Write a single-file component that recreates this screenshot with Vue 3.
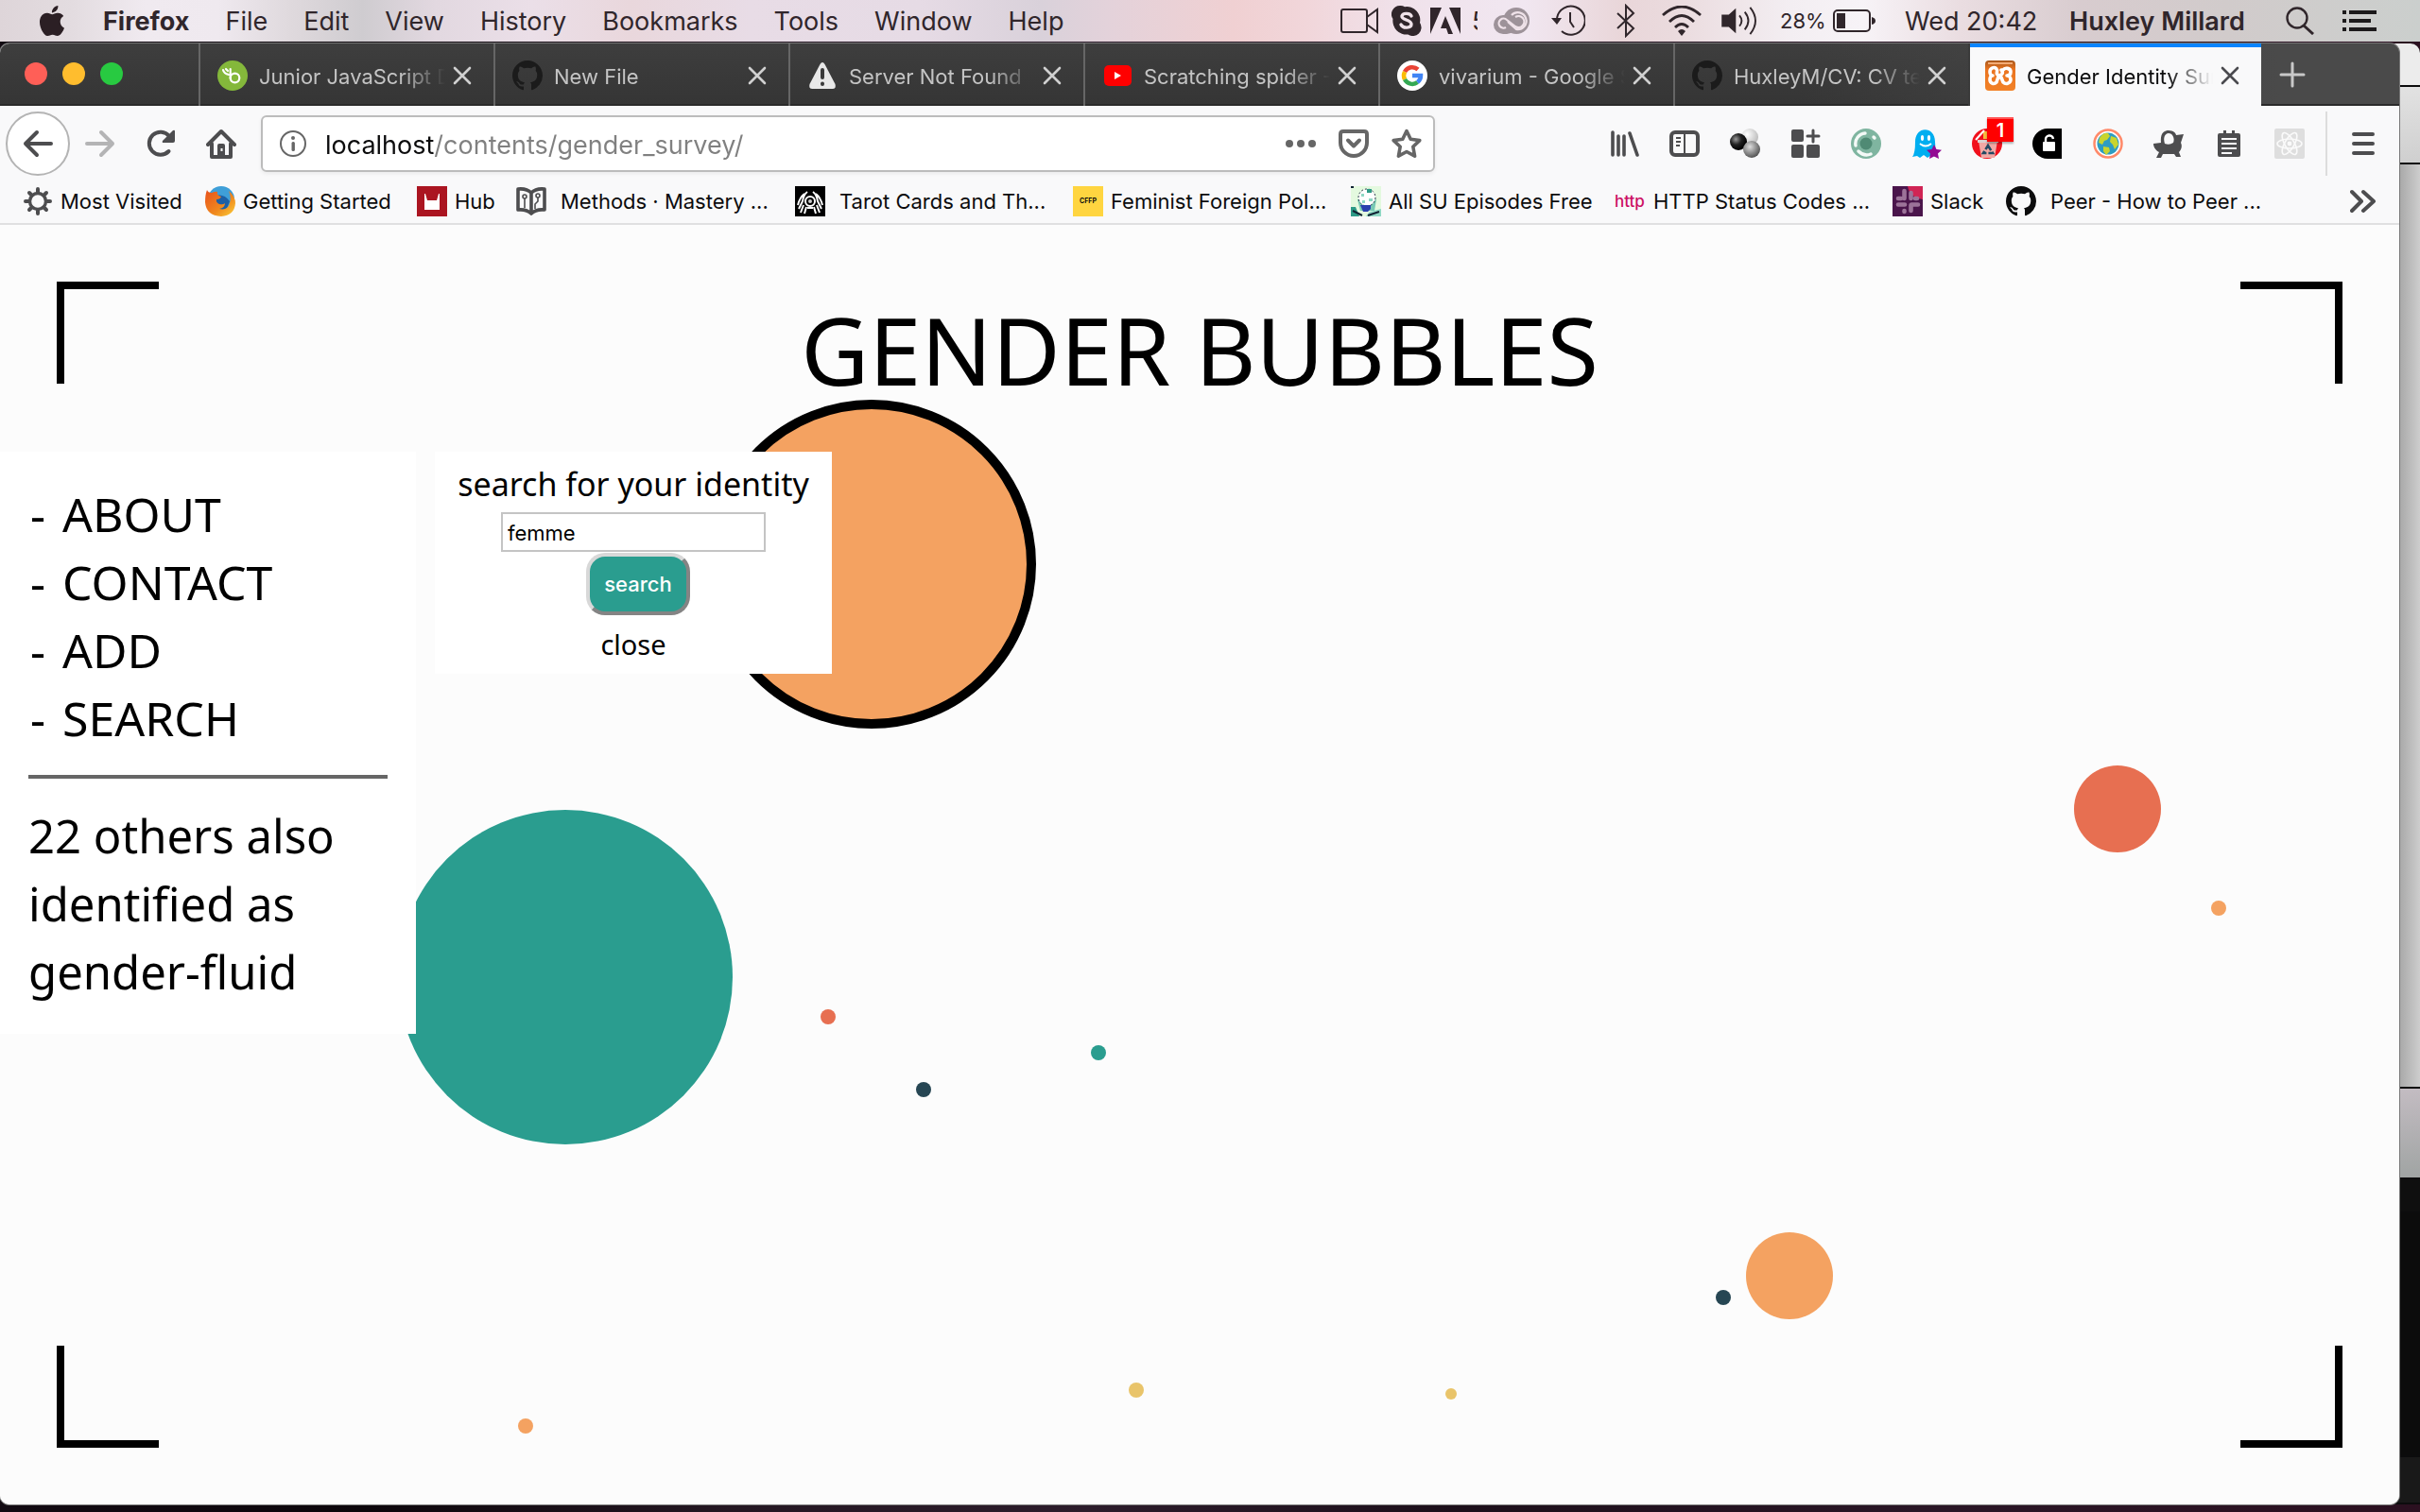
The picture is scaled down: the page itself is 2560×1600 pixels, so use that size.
<script setup>
import { ref } from 'vue'

const menus = ['File', 'Edit', 'View', 'History', 'Bookmarks', 'Tools', 'Window', 'Help']

const tabs = [
  { icon: 'bean', title: 'Junior JavaScript Developer' },
  { icon: 'github', title: 'New File', dark: true },
  { icon: 'warning', title: 'Server Not Found' },
  { icon: 'youtube', title: 'Scratching spider - YouTube' },
  { icon: 'google', title: 'vivarium - Google Search' },
  { icon: 'github', title: 'HuxleyM/CV: CV template', dark: true },
  { icon: 'xampp', title: 'Gender Identity Survey', active: true },
]

const extensions = [
  'library', 'sidebar', 'spheres', 'addons', 'eye', 'ghost',
  'recycle', 'unlock', 'globe', 'cauldron', 'notepad', 'react',
]

const bookmarks = [
  { icon: 'gear', label: 'Most Visited' },
  { icon: 'firefox', label: 'Getting Started' },
  { icon: 'hub', label: 'Hub' },
  { icon: 'book', label: 'Methods · Mastery ...', wide: true },
  { icon: 'tarot', label: 'Tarot Cards and Th...', wide: true },
  { icon: 'cffp', label: 'Feminist Foreign Pol...' },
  { icon: 'episodes', label: 'All SU Episodes Free' },
  { icon: 'http', label: 'HTTP Status Codes ...' },
  { icon: 'slack', label: 'Slack' },
  { icon: 'github', label: 'Peer - How to Peer ...', wide: true },
]

const bubbles = [
  { x: 922, y: 359, r: 169, fill: '#f4a261', ring: true },
  { x: 598, y: 796, r: 177, fill: '#2a9d8f' },
  { x: 876, y: 838, r: 8, fill: '#e76f51' },
  { x: 977, y: 915, r: 8, fill: '#264653' },
  { x: 1162, y: 876, r: 8, fill: '#2a9d8f' },
  { x: 556, y: 1271, r: 8, fill: '#f4a261' },
  { x: 1202, y: 1233, r: 8, fill: '#e9c46a' },
  { x: 1535, y: 1237, r: 6, fill: '#e9c46a' },
  { x: 1823, y: 1135, r: 8, fill: '#264653' },
  { x: 1893, y: 1112, r: 46, fill: '#f4a261' },
  { x: 2240, y: 618, r: 46, fill: '#e76f51' },
  { x: 2347, y: 723, r: 8, fill: '#f4a261' },
]

const pages = ['ABOUT', 'CONTACT', 'ADD', 'SEARCH']
const url = ref('localhost/contents/gender_survey/')
const identity = ref('femme')
</script>

<template>
  <svg class="sprite" aria-hidden="true">
    <defs>
      <radialGradient id="g-black" cx="35%" cy="35%" r="65%"><stop offset="0" stop-color="#999" /><stop offset=".5" stop-color="#222" /><stop offset="1" stop-color="#000" /></radialGradient>
      <radialGradient id="g-white" cx="35%" cy="35%" r="70%"><stop offset="0" stop-color="#fff" /><stop offset="1" stop-color="#bbb" /></radialGradient>
      <radialGradient id="g-grey" cx="40%" cy="35%" r="65%"><stop offset="0" stop-color="#ddd" /><stop offset="1" stop-color="#555" /></radialGradient>
      <linearGradient id="g-fox" x1="0" y1="0" x2="1" y2="1"><stop offset="0" stop-color="#e8501c" /><stop offset=".6" stop-color="#f08a1e" /><stop offset="1" stop-color="#fbd23c" /></linearGradient>
      <linearGradient id="g-xampp" x1="0" y1="0" x2="0" y2="1"><stop offset="0" stop-color="#a8581c" /><stop offset=".3" stop-color="#ea7420" /><stop offset="1" stop-color="#f28228" /></linearGradient>
    </defs>
    <symbol id="apple" viewBox="0 0 24 24"><path fill="currentColor" d="M12.152 6.896c-.948 0-2.415-1.078-3.96-1.04-2.04.027-3.91 1.183-4.961 3.014-2.117 3.675-.546 9.103 1.519 12.09 1.013 1.454 2.208 3.09 3.792 3.039 1.52-.065 2.09-.987 3.935-.987 1.831 0 2.35.987 3.96.948 1.637-.026 2.676-1.48 3.676-2.948 1.156-1.688 1.636-3.325 1.662-3.415-.039-.013-3.182-1.221-3.22-4.857-.026-3.04 2.48-4.494 2.597-4.559-1.429-2.09-3.623-2.324-4.39-2.376-2-.156-3.675 1.09-4.61 1.09zM15.53 3.83c.843-1.012 1.4-2.427 1.245-3.83-1.207.052-2.662.805-3.532 1.818-.78.896-1.454 2.338-1.273 3.714 1.338.104 2.715-.688 3.559-1.701" /></symbol>
    <symbol id="camera" viewBox="0 0 40 32"><path fill="none" stroke="currentColor" stroke-width="2" d="M3 4h23q2 0 2 2v20q0 2-2 2H3q-2 0-2-2V6q0-2 2-2zM28 12l11-8v24l-11-8" /></symbol>
    <symbol id="skype" viewBox="0 0 32 32"><path fill="currentColor" d="M9 0a9 9 0 0 1 5 1.300A14 14 0 0 1 30 18a9 9 0 0 1-12.500 12.500A14.500 14.500 0 0 1 1.500 14 9 9 0 0 1 9 0z" /><path fill="none" stroke="#efe2e9" stroke-width="3.400" stroke-linecap="round" d="M21 11c-1-3-9-4-10 0s10 4 10 8.500-9 5-11 .5" /></symbol>
    <symbol id="adobe" viewBox="0 0 32 28"><path fill="currentColor" d="M0 0h12L0 28zM20 0h12v28zM16 9l8 19h-5l-2-6h-6z" /></symbol>
    <symbol id="cloud" viewBox="0 0 40 30"><rect x="1" y="9" width="24" height="20" rx="10" fill="currentColor" /><circle cx="25" cy="15" r="14" fill="currentColor" /><g fill="none" stroke="#efe2e9" stroke-width="2.200"><path d="M14 22a5 5 0 1 1 1-8l9 7a6 6 0 1 0 0-10" /><path d="M20 9a9 9 0 1 1 5 15l-9-8" /></g></symbol>
    <symbol id="history" viewBox="0 0 36 36"><g fill="none" stroke="currentColor" stroke-width="2"><path d="M6 15a15 15 0 1 1 5 14" /><path d="M20 9v10l4 6" /></g><path fill="currentColor" d="M0 15h11l-5 7z" /></symbol>
    <symbol id="bluetooth" viewBox="0 0 20 36"><path fill="none" stroke="currentColor" stroke-width="2" d="M1 10l17 16-8 8V2l8 8L1 26" /></symbol>
    <symbol id="wifi" viewBox="0 0 42 32"><g fill="none" stroke="currentColor" stroke-width="2.800"><path d="M1 10Q21-8 41 10" /><path d="M8 17Q21 4 34 17" /><path d="M14 23Q21 16 28 23" /></g><path fill="currentColor" d="M17 27q4-4 8 0l-4 5z" /></symbol>
    <symbol id="volume" viewBox="0 0 42 34"><path fill="currentColor" d="M0 10h8l8-7v28l-8-7H0z" /><g fill="none" stroke="currentColor" stroke-width="2"><path d="M20 11q5 6 0 12M26 7q8 10 0 20M32 2q12 15 0 30" /></g></symbol>
    <symbol id="battery" viewBox="0 0 46 26"><rect x="1" y="2" width="38" height="22" rx="4" fill="none" stroke="currentColor" stroke-width="2" /><path fill="currentColor" d="M4 5h9v16H4zM41 9q4 1 4 4t-4 4z" /></symbol>
    <symbol id="search" viewBox="0 0 30 30"><g fill="none" stroke="currentColor" stroke-width="2.400"><circle cx="12" cy="12" r="10.500" /><path stroke-width="3" d="M19 20l10 9" /></g></symbol>
    <symbol id="list" viewBox="0 0 36 22"><path fill="currentColor" d="M0 0h4v4H0zM7 0h29v4H7zM0 9h4v4H0zM7 9h23v4H7zM0 18h4v4H0zM7 18h29v4H7z" /></symbol>

    <symbol id="bean" viewBox="0 0 32 32"><circle cx="16" cy="16" r="16" fill="#84b83b" /><g fill="none" stroke="#fff" stroke-width="2.200" stroke-linecap="round"><circle cx="18.500" cy="18.500" r="4.800" /><path d="M13.700 19V9" /><path d="M12 15q-5-1-6-5M11 11L9 9" /></g></symbol>
    <symbol id="github" viewBox="0 0 16 16"><path fill="currentColor" d="M8 0C3.580 0 0 3.580 0 8c0 3.540 2.290 6.530 5.470 7.590.4.070.55-.17.55-.38 0-.19-.01-.82-.01-1.490-2.010.37-2.530-.49-2.690-.94-.09-.23-.48-.94-.82-1.130-.28-.15-.68-.52-.01-.53.63-.01 1.080.58 1.230.82.72 1.210 1.870.87 2.330.66.070-.52.28-.87.51-1.070-1.780-.2-3.640-.89-3.640-3.950 0-.87.31-1.590.82-2.150-.08-.2-.36-1.020.080-2.120 0 0 .67-.21 2.200.82.64-.18 1.320-.27 2-.27s1.360.09 2 .27c1.530-1.040 2.200-.82 2.200-.82.44 1.100.16 1.920.08 2.120.51.56.82 1.270.82 2.150 0 3.070-1.870 3.750-3.650 3.950.29.25.54.73.54 1.480 0 1.070-.01 1.930-.01 2.200 0 .21.15.46.55.38A8.010 8.010 0 0 0 16 8c0-4.420-3.580-8-8-8z" /></symbol>
    <symbol id="warning" viewBox="0 0 32 32"><path fill="#e8e8e8" d="M13.500 4q2.500-4 5 0l11 21q1.500 5-3 5h-21q-4.500 0-3-5z" /><path stroke="#3a3a3a" stroke-width="4" stroke-linecap="round" d="M16 10v8M16 24.500v.5" /></symbol>
    <symbol id="youtube" viewBox="0 0 32 32"><rect x="2" y="5" width="29" height="22" rx="5" fill="#f00" /><path fill="#fff" d="M13 12v8l7-4z" /></symbol>
    <symbol id="google" viewBox="0 0 32 32"><circle cx="16" cy="16" r="16" fill="#fff" /><g fill="none" stroke-width="4.500"><path stroke="#ea4335" d="M8 12a9 9 0 0 1 14-2.500" /><path stroke="#fbbc05" d="M8 20a9 9 0 0 1 0-8" /><path stroke="#34a853" d="M21.500 23A9 9 0 0 1 8 20" /><path stroke="#4285f4" d="M16 16h9a9 9 0 0 1-3.500 7" /></g></symbol>
    <symbol id="xampp" viewBox="0 0 32 32"><rect width="32" height="32" rx="4" fill="url(#g-xampp)" /><path fill="#f3ab74" d="M3 2h26v2H3z" /><path fill="none" stroke="#fff" stroke-width="3.600" stroke-linejoin="round" stroke-linecap="round" d="M19 10c2-3 8-2 8 2 0 3-2 4-4 4 2 0 4 2 4 4 0 4-5 6-8 3l-2-5-3-1-2 6c-3 3-7 1-7-3 0-2 1-4 3-4-2 0-3-2-3-4 0-4 5-6 7-3 2 2-1 5 1 6s4 1 5-1 0-3-1-4z" /></symbol>
    <symbol id="close" viewBox="0 0 20 20"><path fill="none" stroke="currentColor" stroke-width="2.600" stroke-linecap="round" d="M2 2l16 16M18 2L2 18" /></symbol>
    <symbol id="plus" viewBox="0 0 28 28"><path fill="none" stroke="currentColor" stroke-width="3" stroke-linecap="round" d="M14 2v24M2 14h24" /></symbol>

    <symbol id="back" viewBox="0 0 32 32"><path fill="none" stroke="currentColor" stroke-width="4" stroke-linecap="round" stroke-linejoin="round" d="M30 16H3M15 4L3 16l12 12" /></symbol>
    <symbol id="forward" viewBox="0 0 32 32"><path fill="none" stroke="currentColor" stroke-width="4" stroke-linecap="round" stroke-linejoin="round" d="M2 16h27M17 4l12 12-12 12" /></symbol>
    <symbol id="reload" viewBox="0 0 32 32"><path fill="none" stroke="currentColor" stroke-width="4" stroke-linecap="round" d="M24.500 24A12 12 0 1 1 25 8" /><path fill="currentColor" d="M29 2q2-1 2 1v10q0 2-2 2H19q-2 0-1-2z" /></symbol>
    <symbol id="home" viewBox="0 0 32 32"><g fill="none" stroke="currentColor" stroke-width="4" stroke-linejoin="round" stroke-linecap="round"><path d="M2 17L16 3l14 14" /><path d="M6 16v14h20V16" /></g><path fill="currentColor" d="M12 18q0-2 2-2h4q2 0 2 2v12h-8z" /><path fill="#fff" d="M15.500 21h2v3h-2z" /></symbol>
    <symbol id="info" viewBox="0 0 28 28"><circle cx="14" cy="14" r="13" fill="none" stroke="currentColor" stroke-width="2" /><circle cx="14" cy="8" r="2" fill="currentColor" /><rect x="12.500" y="12" width="3.400" height="10" rx="1.500" fill="currentColor" /></symbol>
    <symbol id="dots" viewBox="0 0 32 32"><g fill="currentColor"><circle cx="4" cy="16" r="4" /><circle cx="16" cy="16" r="4" /><circle cx="28" cy="16" r="4" /></g></symbol>
    <symbol id="pocket" viewBox="0 0 32 32"><g fill="none" stroke="currentColor" stroke-width="4" stroke-linecap="round" stroke-linejoin="round"><path d="M5 3h22q3 0 3 3v9a14 14 0 0 1-28 0V6q0-3 3-3z" /><path d="M10 12.500l6 6 6-6" /></g></symbol>
    <symbol id="star" viewBox="0 0 32 32"><path fill="none" stroke="currentColor" stroke-width="3.600" stroke-linejoin="round" d="M16 2.500l4.200 8.800 9.600 1.300-7 6.700 1.800 9.900L16 24.500l-8.600 4.700 1.800-9.900-7-6.700 9.600-1.300z" /></symbol>

    <symbol id="library" viewBox="0 0 32 32"><path fill="none" stroke="currentColor" stroke-width="3.600" stroke-linecap="round" d="M4 4v24M10 8v20M16 8v20M22 5l8 23" /></symbol>
    <symbol id="sidebar" viewBox="0 0 32 32"><rect x="2" y="4" width="28" height="24" rx="4" fill="none" stroke="currentColor" stroke-width="4" /><path stroke="currentColor" stroke-width="2" d="M16 4v24M7 10h5M7 14h5M7 18h4" /></symbol>
    <symbol id="spheres" viewBox="0 0 32 32"><circle cx="21" cy="9" r="9" fill="url(#g-white)" /><circle cx="9" cy="14" r="9" fill="url(#g-black)" /><circle cx="23" cy="22" r="9" fill="url(#g-grey)" /></symbol>
    <symbol id="addons" viewBox="0 0 32 32"><g fill="currentColor"><rect x="1" y="1" width="13" height="13" rx="2" /><rect x="1" y="17" width="13" height="14" rx="2" /><rect x="17" y="17" width="14" height="14" rx="2" /></g><path stroke="currentColor" stroke-width="3" stroke-linecap="round" d="M24 2v12M18 8h12" /></symbol>
    <symbol id="eye" viewBox="0 0 32 32"><circle cx="16" cy="16" r="16" fill="#7fb5a0" /><circle cx="16" cy="16" r="6.500" fill="#4f8a74" /><g fill="none" stroke="#f4faf7" stroke-width="3.400" stroke-linecap="round"><path d="M5 18A11 11 0 0 1 15 5M8 24q6 6 13 3" /><path d="M24 9l1 1" /></g></symbol>
    <symbol id="ghost" viewBox="0 0 32 32"><path fill="#00aef0" d="M4 14C4-3 25-3 25 14l1 16-5-2-4 3-4-3-4 3-3-2-5 1q3-4 3-16z" /><ellipse cx="11.500" cy="10" rx="1.600" ry="3" fill="#fff" /><ellipse cx="18.500" cy="10" rx="1.600" ry="3" fill="#fff" /><path fill="none" stroke="#fff" stroke-width="2" d="M9 16q6 5 12 0" /><path fill="#930a93" d="M24 17l2.500 5 5.500.8-4 3.800 1 5.400-5-2.600-5 2.600 1-5.400-4-3.800 5.500-.8z" /></symbol>
    <symbol id="recycle" viewBox="0 0 32 32"><circle cx="16" cy="16" r="16" fill="#f1101c" /><path fill="#f9b93e" d="M12 3h10v8H12z" /><path fill="#f2a8a4" d="M7 13h20l-3 18H10z" /><path fill="#dcd2d0" d="M6 12h22v3H6z" /><path fill="none" stroke="#244a63" stroke-width="2.600" stroke-dasharray="6 2" d="M17 18l5 8H12z" /><path stroke="#fff" stroke-width="2" d="M4 12l9-10" /></symbol>
    <symbol id="unlock" viewBox="0 0 32 32"><path fill="#000" d="M16 0h15v32H16A16 16 0 0 1 16 0z" /><rect x="11" y="14" width="13" height="10" rx="1" fill="#fff" /><path fill="none" stroke="#fff" stroke-width="2.400" d="M14 15v-3a4 4 0 0 1 8-1" /></symbol>
    <symbol id="globe" viewBox="0 0 32 32"><circle cx="16" cy="16" r="14.500" fill="#fff" stroke="#ff8a6a" stroke-width="2.500" /><circle cx="16" cy="16" r="11.500" fill="#2e9cc2" /><path fill="#c9d42e" d="M7 10q4-6 9-5l2 3-3 4-3 1-2 4-4-2zM19 8l6 2 2 7-4 5-2-5-3-3zM11 19l6 1 1 4-4 4-3-4z" /></symbol>
    <symbol id="cauldron" viewBox="0 0 32 32"><path fill="currentColor" d="M8 15C7 5 11 2 16 2s8 3 8 5l8-1-3 9c2 4 0 8-2 10l2 5h-5l-2-3H10l-2 4H3l3-6c-4-2-6-6-6-9z" /><path fill="#f9f9fa" d="M12 16c-2-6 0-11 4-11s7 5 5 10q-4 3-9 1z" /></symbol>
    <symbol id="notepad" viewBox="0 0 32 32"><path fill="currentColor" d="M6 5h4V2h3v3h6V2h3v3h4q2 0 2 2v21q0 2-2 2H6q-2 0-2-2V7q0-2 2-2z" /><path stroke="#f9f9fa" stroke-width="2" d="M8 11h16M8 16h16M8 21h16M8 26h11" /></symbol>
    <symbol id="react" viewBox="0 0 32 32"><rect width="32" height="32" rx="2" fill="#dedede" /><g fill="none" stroke="#fafafa" stroke-width="1.600"><ellipse cx="16" cy="16" rx="13" ry="5" /><ellipse cx="16" cy="16" rx="13" ry="5" transform="rotate(60 16 16)" /><ellipse cx="16" cy="16" rx="13" ry="5" transform="rotate(120 16 16)" /></g><circle cx="16" cy="16" r="2.400" fill="#fafafa" /></symbol>
    <symbol id="menu" viewBox="0 0 24 24"><path stroke="currentColor" stroke-width="4" stroke-linecap="round" d="M2 2h20M2 12h20M2 22h20" /></symbol>

    <symbol id="gear" viewBox="0 0 32 32"><circle cx="16" cy="16" r="8.500" fill="none" stroke="currentColor" stroke-width="3.400" /><path stroke="currentColor" stroke-width="4" stroke-linecap="round" d="M16 3v3M16 26v3M3 16h3M26 16h3M7 7l2 2M23 23l2 2M7 25l2-2M23 9l2-2" /></symbol>
    <symbol id="firefox" viewBox="0 0 32 32"><circle cx="17" cy="14" r="14" fill="#3f9fd8" /><path fill="#1d5fa5" d="M12 10q8-2 14 6l-4 10-10-2z" /><path fill="url(#g-fox)" d="M2 4q1 3 5 3 4-2 6-1-1 4 4 5-1 3-5 3-1 3 3 5 4 1 6-1 0 5-6 6 9 2 11-6 2-6-1-13 7 6 7 13-1 13-15 14Q1 31 0 17 0 9 2 4z" /></symbol>
    <symbol id="hub" viewBox="0 0 32 32"><path fill="#ab1521" d="M0 0h32v32H0z" /><path fill="#fff" d="M8 8h1l2 7h10l2-7h1v17H8z" /></symbol>
    <symbol id="book" viewBox="0 0 32 32"><path fill="none" stroke="currentColor" stroke-width="3.600" stroke-linejoin="round" d="M2 3q9-1 14 4 5-5 14-4v22q-9-1-14 4-5-5-14-4zM16 7v20" /><g fill="none" stroke="currentColor" stroke-width="1.600"><circle cx="9" cy="11" r="2" /><path d="M9 13v10M23 12v4l-3 3v5" /><circle cx="23" cy="10" r="2" /></g></symbol>
    <symbol id="tarot" viewBox="0 0 32 32"><path fill="#000" d="M0 0h32v32H0z" /><g fill="none" stroke="#fff" stroke-width="2"><circle cx="16" cy="16" r="5" /><path d="M13 6Q9 9 8 16l-4 8M19 6q4 3 5 10l4 8M10 8q-5 4-7 12M22 8q5 4 7 12M9 20l-3 8M23 20l3 8M12 22l-2 7M20 22l2 7M13 23h6" /></g><circle cx="16" cy="16" r="2" fill="#ccc" /></symbol>
    <symbol id="episodes" viewBox="0 0 32 32"><path fill="#e4f9df" d="M0 0h32v32H0z" /><path fill="#78c9b4" d="M7 14h20l-2 12H10z" /><circle cx="17" cy="12" r="9" fill="#fff" stroke="#234" stroke-width="1" stroke-dasharray="2 2" /><path fill="#2d9a86" d="M17 3h5v4h-5zM0 22h5l4 10H0z" /><path fill="#8fd8c4" d="M11 8h3v3h-3zM19 13h4v3h-4zM12 15h3v3h-3zM20 27l12-3v8H16z" /><path fill="#2a3fae" d="M10 20h11v4l-3 3h-5z" /><path stroke="#123" stroke-width="2" d="M2 26l10 5M18 31l12-4M0 1h3" /></symbol>
    <symbol id="slack" viewBox="0 0 32 32"><path fill="#4a154b" d="M0 0h32v32H0z" /><path fill="#d02454" d="M16 0h16v14Q18 12 16 0z" /><g stroke="#9c7399" stroke-width="4.600" stroke-linecap="round"><path d="M12.500 5v8M6 13h3M19.500 7v6M24 13h2M6 19.500h7M12.500 26v1M19.500 20v6M20 19.500h7" /></g></symbol>
    <symbol id="chevrons" viewBox="0 0 28 26"><path fill="none" stroke="currentColor" stroke-width="4" stroke-linecap="round" stroke-linejoin="round" d="M2 3l10 10L2 23M14 3l11 10-11 10" /></symbol>
  </svg>

  <div class="screen">
    <header class="menubar">
      <nav class="menus" aria-label="Menu bar">
        <svg class="apple"><use href="#apple" /></svg>
        <strong>Firefox</strong>
        <span v-for="m in menus" :key="m">{{ m }}</span>
      </nav>
      <div class="status">
        <svg class="s-camera"><use href="#camera" /></svg>
        <svg class="s-icon"><use href="#skype" /></svg>
        <svg class="s-adobe"><use href="#adobe" /></svg>
        <span class="clipped">5</span>
        <svg class="s-cloud"><use href="#cloud" /></svg>
        <svg class="s-clock"><use href="#history" /></svg>
        <svg class="s-bt"><use href="#bluetooth" /></svg>
        <svg class="s-wide"><use href="#wifi" /></svg>
        <svg class="s-wide"><use href="#volume" /></svg>
        <span class="percent">28%</span>
        <svg class="s-battery"><use href="#battery" /></svg>
        <span>Wed 20:42</span>
        <span class="user">Huxley Millard</span>
        <svg class="s-search"><use href="#search" /></svg>
        <svg class="s-list"><use href="#list" /></svg>
      </div>
    </header>

    <main class="desktop">
      <div class="behind" aria-hidden="true">
        <i class="b-title"></i>
        <i class="b-bar"></i>
        <i class="b-page"></i>
        <i class="b-dock"></i>
        <i class="b-head"></i>
        <i class="b-dark"></i>
        <i class="b-foot"></i>
      </div>

      <section class="window">
        <div class="tabbar">
          <div class="lights"><i class="red"></i><i class="amber"></i><i class="green"></i></div>
          <div class="tabs" role="tablist">
            <div v-for="t in tabs" :key="t.title" class="tab" :class="{ active: t.active }" role="tab">
              <svg class="icon" :class="{ dark: t.dark }"><use :href="'#' + t.icon" /></svg>
              <span class="tab-title">{{ t.title }}</span>
              <button class="tab-close" aria-label="Close tab"><svg><use href="#close" /></svg></button>
            </div>
          </div>
          <button class="new-tab" aria-label="New tab"><svg><use href="#plus" /></svg></button>
        </div>

        <div class="toolbar">
          <button class="back" aria-label="Back"><svg class="icon"><use href="#back" /></svg></button>
          <div class="nav-icons">
            <button class="tool faded" aria-label="Forward"><svg class="icon"><use href="#forward" /></svg></button>
            <button class="tool" aria-label="Reload"><svg class="icon"><use href="#reload" /></svg></button>
            <button class="tool" aria-label="Home"><svg class="icon"><use href="#home" /></svg></button>
          </div>
          <div class="urlbar">
            <svg class="info"><use href="#info" /></svg>
            <input v-model="url" class="url" type="text" aria-label="Address" spellcheck="false" />
            <button class="tool" aria-label="Page actions"><svg class="icon"><use href="#dots" /></svg></button>
            <button class="tool" aria-label="Save to Pocket"><svg class="icon"><use href="#pocket" /></svg></button>
            <button class="tool" aria-label="Bookmark"><svg class="icon"><use href="#star" /></svg></button>
          </div>
          <div class="extensions">
            <button v-for="e in extensions" :key="e" class="tool" :aria-label="e">
              <svg class="icon"><use :href="'#' + e" /></svg>
              <span v-if="e === 'recycle'" class="badge">1</span>
            </button>
          </div>
          <button class="app-menu" aria-label="Open menu"><svg><use href="#menu" /></svg></button>
        </div>

        <nav class="bookmarks" aria-label="Bookmarks">
          <a v-for="b in bookmarks" :key="b.label" href="#" :class="{ wide: b.wide }">
            <span v-if="b.icon === 'cffp'" class="icon cffp">CFFP</span>
            <span v-else-if="b.icon === 'http'" class="http">http</span>
            <svg v-else class="icon" :class="b.icon"><use :href="'#' + b.icon" /></svg>
            <span>{{ b.label }}</span>
          </a>
          <button class="more" aria-label="More bookmarks"><svg><use href="#chevrons" /></svg></button>
        </nav>

        <article class="page">
          <svg class="bubbles" aria-hidden="true">
            <circle v-for="(b, i) in bubbles" :key="i" :cx="b.x" :cy="b.y" :r="b.r" :fill="b.fill" :class="{ ring: b.ring }" />
          </svg>
          <i class="corner tl"></i><i class="corner tr"></i><i class="corner bl"></i><i class="corner br"></i>

          <h1>GENDER BUBBLES</h1>
          <div class="panels">
            <aside class="side">
              <ul>
                <li v-for="p in pages" :key="p"><a href="#"><span class="dash">-</span>{{ p }}</a></li>
              </ul>
              <hr />
              <p>22 others also identified as gender-fluid</p>
            </aside>
            <form class="finder" @submit.prevent>
              <label for="identity">search for your identity</label>
              <input id="identity" v-model="identity" type="text" />
              <button class="go" type="submit">search</button>
              <button class="dismiss" type="button">close</button>
            </form>
          </div>
        </article>
      </section>
    </main>
  </div>
</template>

<style>
body { margin: 0; background: #14090f; }
</style>

<style scoped>
* { box-sizing: border-box; }
button { border: 0; padding: 0; margin: 0; background: none; color: inherit; font: inherit; display: flex; align-items: center; justify-content: center; }
a { color: inherit; text-decoration: none; }
svg { display: block; flex: none; }
.sprite { position: absolute; width: 0; height: 0; }

.screen {
  min-height: 100vh; display: flex; flex-direction: column; overflow: hidden;
  font-family: Inter, "Liberation Sans", sans-serif; color: #0c0c0d;
}
.icon { width: 32px; height: 32px; }

/* System menu bar */
.menubar {
  height: 44px; display: flex; align-items: center; justify-content: space-between;
  font-size: 27px; color: #30262b; white-space: nowrap;
  background: linear-gradient(90deg, #ded5d9 0%, #e3dce0 3%, #f0eaf0 6%, #efe9ef 9%, #dfd9dd 12%, #cfccd0 15%, #e2d8e0 18%, #ebdfe8 22%, #e9d7dc 26%, #e8dce6 31%, #e6dbe5 38%, #d9d1da 43%, #e4d2da 46%, #f0d0d2 51%, #f1d6da 54%, #f0e2eb 58%, #f1e7f1 63%, #e9d6d9 67%, #eadadd 69%, #f3eef2 74%, #f7f3f7 77%, #eadde1 81%, #d8cccf 86%, #d1cbcb 92%, #cbcfcd 100%);
}
.menus { display: flex; align-items: center; gap: 38px; padding-left: 39px; }
.apple { width: 32px; height: 32px; color: #2b1f24; }
.menus strong { font-weight: 700; }
.status {
  display: grid; align-items: center; padding-right: 46px;
  grid-template-columns: 54px 41px 44px 22px 62px 69px 48px 62px 63px 56px 76px 174px 229px 60px 36px;
}
.s-camera { width: 40px; height: 32px; }
.s-icon { width: 32px; height: 32px; }
.s-adobe { width: 32px; height: 28px; }
.clipped { width: 6px; overflow: hidden; font-size: 27px; }
.s-cloud { width: 40px; height: 30px; color: #9d9299; }
.s-clock { width: 36px; height: 36px; }
.s-bt { width: 20px; height: 36px; }
.s-wide { width: 42px; height: 32px; }
.percent { font-size: 22px; }
.s-battery { width: 46px; height: 26px; }
.user { font-weight: 600; }
.s-search { width: 30px; height: 30px; }
.s-list { width: 36px; height: 22px; color: #1c1a1b; }

/* Desktop and the window peeking out behind */
.desktop {
  flex: 1; display: flex; position: relative; padding: 2px 22px 8px 0;
  background: linear-gradient(90deg, #120a12, #0c060b 15%, #241722 30%, #2c1c2b 45%, #1c0f1a 60%, #2a1626 80%, #2b1020);
}
.behind { position: absolute; inset: 2px 0 8px auto; width: 60px; display: flex; flex-direction: column; background: #000; border-top-right-radius: 10px; overflow: hidden; }
.behind i { border-bottom: 2px solid; }
.b-title { height: 46px; background: #ececec; border-color: #444; }
.b-bar { height: 82px; background: linear-gradient(#e2e2e2, #cfcfcf); border-color: #8a8a8a; }
.b-page { flex: 1; background: linear-gradient(90deg, #a8a8a8 38px, #cdcdcd); border-color: #444; }
.b-dock { height: 96px; background: linear-gradient(#c3bcc2, #a0a4a3); border-color: #1e211f; }
.b-head { height: 36px; background: #0f0f0f; border-color: #000; }
.b-dark { height: 258px; background: #0c0c0c; border-color: #1d1d1d; }
.b-foot { height: 50px; background: #191919; border-color: #191919; }

/* Browser window */
.window {
  flex: 1; min-width: 0; display: flex; flex-direction: column; position: relative;
  border-radius: 10px; overflow: hidden; background: #f9f9fa; box-shadow: 0 0 0 1px #777;
}
.tabbar {
  height: 66px; display: flex; color: #c4c4c4; border-bottom: 2px solid #2a2a2a;
  background: linear-gradient(90deg, transparent 75%, #4a4a4a 95%), linear-gradient(#3e3e3e, #353535);
}
.lights { width: 210px; flex: none; display: flex; align-items: center; gap: 16px; padding-left: 26px; }
.lights i { width: 24px; height: 24px; border-radius: 50%; }
.red { background: #ff5f57; }
.amber { background: #ffbd2e; }
.green { background: #28ca41; }
.tabs { display: flex; flex: 0 1 2182px; min-width: 0; }
.tab {
  flex: 1; min-width: 0; height: 66px; display: flex; align-items: center; gap: 12px;
  padding: 1px 21px 0 18px; border-left: 2px solid #666; font-size: 22px;
}
.tab.active { padding-left: 16px; background: #f9f9fa; color: #0c0c0d; border-left-color: #3a3a3a; box-shadow: inset 0 4px #0a84ff; }
.icon.dark { color: #1b1b1b; }
.tab-title { flex: 1; min-width: 0; overflow: hidden; white-space: nowrap; margin-right: -6px; line-height: 28px; padding-top: 2px; mask-image: linear-gradient(90deg, #000 calc(100% - 48px), transparent); }
.tab-close { width: 24px; height: 24px; color: #d0d0d0; }
.tab-close svg { width: 20px; height: 20px; }
.active .tab-close { color: #4a4a4f; }
.new-tab { width: 66px; height: 66px; color: #c8c8c8; }
.new-tab svg { width: 28px; height: 28px; }

.toolbar { height: 80px; display: flex; align-items: center; padding-left: 6px; color: #4d4d4f; }
.back { width: 68px; height: 68px; border-radius: 50%; border: 2px solid #b4b4b4; background: #fff; }
.nav-icons { display: flex; gap: 32px; margin: 0 26px 0 16px; }
.faded { color: #b4b4b5; }
.urlbar {
  flex: 1; min-width: 0; height: 60px; display: flex; align-items: center; gap: 20px; padding: 0 12px 0 18px;
  background: #fff; border: 2px solid #bcbcbc; border-radius: 6px; box-shadow: 0 2px 4px rgba(0, 0, 0, .06); color: #666;
}
.urlbar .tool + .tool { margin-left: 4px; }
.info { width: 28px; height: 28px; }
.url {
  flex: 1; min-width: 0; border: 0; padding: 2px 0 0; outline: 0; font: 27px Inter, sans-serif; color: transparent;
  background: linear-gradient(90deg, #0c0c0d 115px, #808080 115px); -webkit-background-clip: text; background-clip: text;
}
.extensions { display: flex; gap: 32px; margin: 0 22px 0 184px; }
.tool { position: relative; width: 32px; height: 32px; }
.badge {
  position: absolute; left: 16px; top: -12px; width: 28px; height: 26px; background: #f00; border-top: 2px solid #f55;
  color: #fff; font-size: 20px; font-weight: 600; line-height: 24px; text-align: center; box-shadow: 0 2px 2px rgba(0, 0, 0, .3);
}
.app-menu { width: 78px; height: 68px; border-left: 2px solid #ddd; }
.app-menu svg { width: 24px; height: 24px; overflow: visible; }

.bookmarks {
  height: 46px; display: grid; padding: 0 24px 2px; font-size: 22px; white-space: nowrap; border-bottom: 2px solid #e0e0e1;
  grid-template-columns: 193px 224px 105px 295px 294px 294px 272px 301px 120px 1fr 28px;
}
.bookmarks a { display: flex; align-items: center; gap: 8px; }
.bookmarks a.wide { gap: 15px; }
.gear, .book, .more { color: #4d4d4f; }
.cffp { background: #ffd540; font-size: 7px; line-height: 32px; text-align: center; font-weight: 700; }
.http { width: 40px; padding-left: 7px; font-size: 17px; font-weight: 500; color: #cc0f64; }
.more svg { width: 28px; height: 26px; }

/* Page */
.page { flex: 1; position: relative; background: #fcfcfc; color: #000; font-family: "Noto Sans", "Open Sans", sans-serif; }
.bubbles { position: absolute; inset: 0; width: 100%; height: 100%; }
.ring { stroke: #000; stroke-width: 10px; }
.corner { position: absolute; width: 108px; height: 108px; border: 0 solid #000; }
.tl { top: 60px; left: 60px; border-width: 8px 0 0 8px; }
.tr { top: 60px; right: 60px; border-width: 8px 8px 0 0; }
.bl { bottom: 60px; left: 60px; border-width: 0 0 8px 8px; }
.br { bottom: 60px; right: 60px; border-width: 0 8px 8px 0; }
h1 { position: relative; margin: 0; padding-top: 60px; height: 240px; font-size: 99px; font-weight: 400; line-height: 144px; text-align: center; }
.panels { position: relative; display: flex; align-items: flex-start; gap: 20px; }
.side { width: 440px; padding: 30px; background: #fff; font-size: 50px; line-height: 72px; }
.side ul { list-style: none; margin: 0; padding: 0; }
.dash { display: inline-block; width: 36px; padding-left: 2px; }
.side hr { height: 4px; margin: 24px 0; border: 0; background: #666; }
.side p { margin: 0; font-size: 49px; }
.finder { width: 420px; height: 235px; padding-top: 10px; display: flex; flex-direction: column; align-items: center; background: #fff; font-size: 34px; }
.finder label { line-height: 48px; margin-bottom: 6px; }
.finder input { width: 280px; height: 42px; padding: 2px 5px 0; border: 2px solid #c4c4c4; background: #fff; font: 22px Inter, sans-serif; color: #000; }
.go { width: 110px; height: 66px; margin: 1px 0 0 10px; border: 4px outset #d8d8d8; border-radius: 20px; background: #2a9d8f; color: #fff; font: 500 22px Inter, sans-serif; }
.dismiss { margin-top: 10px; font-size: 29px; line-height: 42px; }
</style>
